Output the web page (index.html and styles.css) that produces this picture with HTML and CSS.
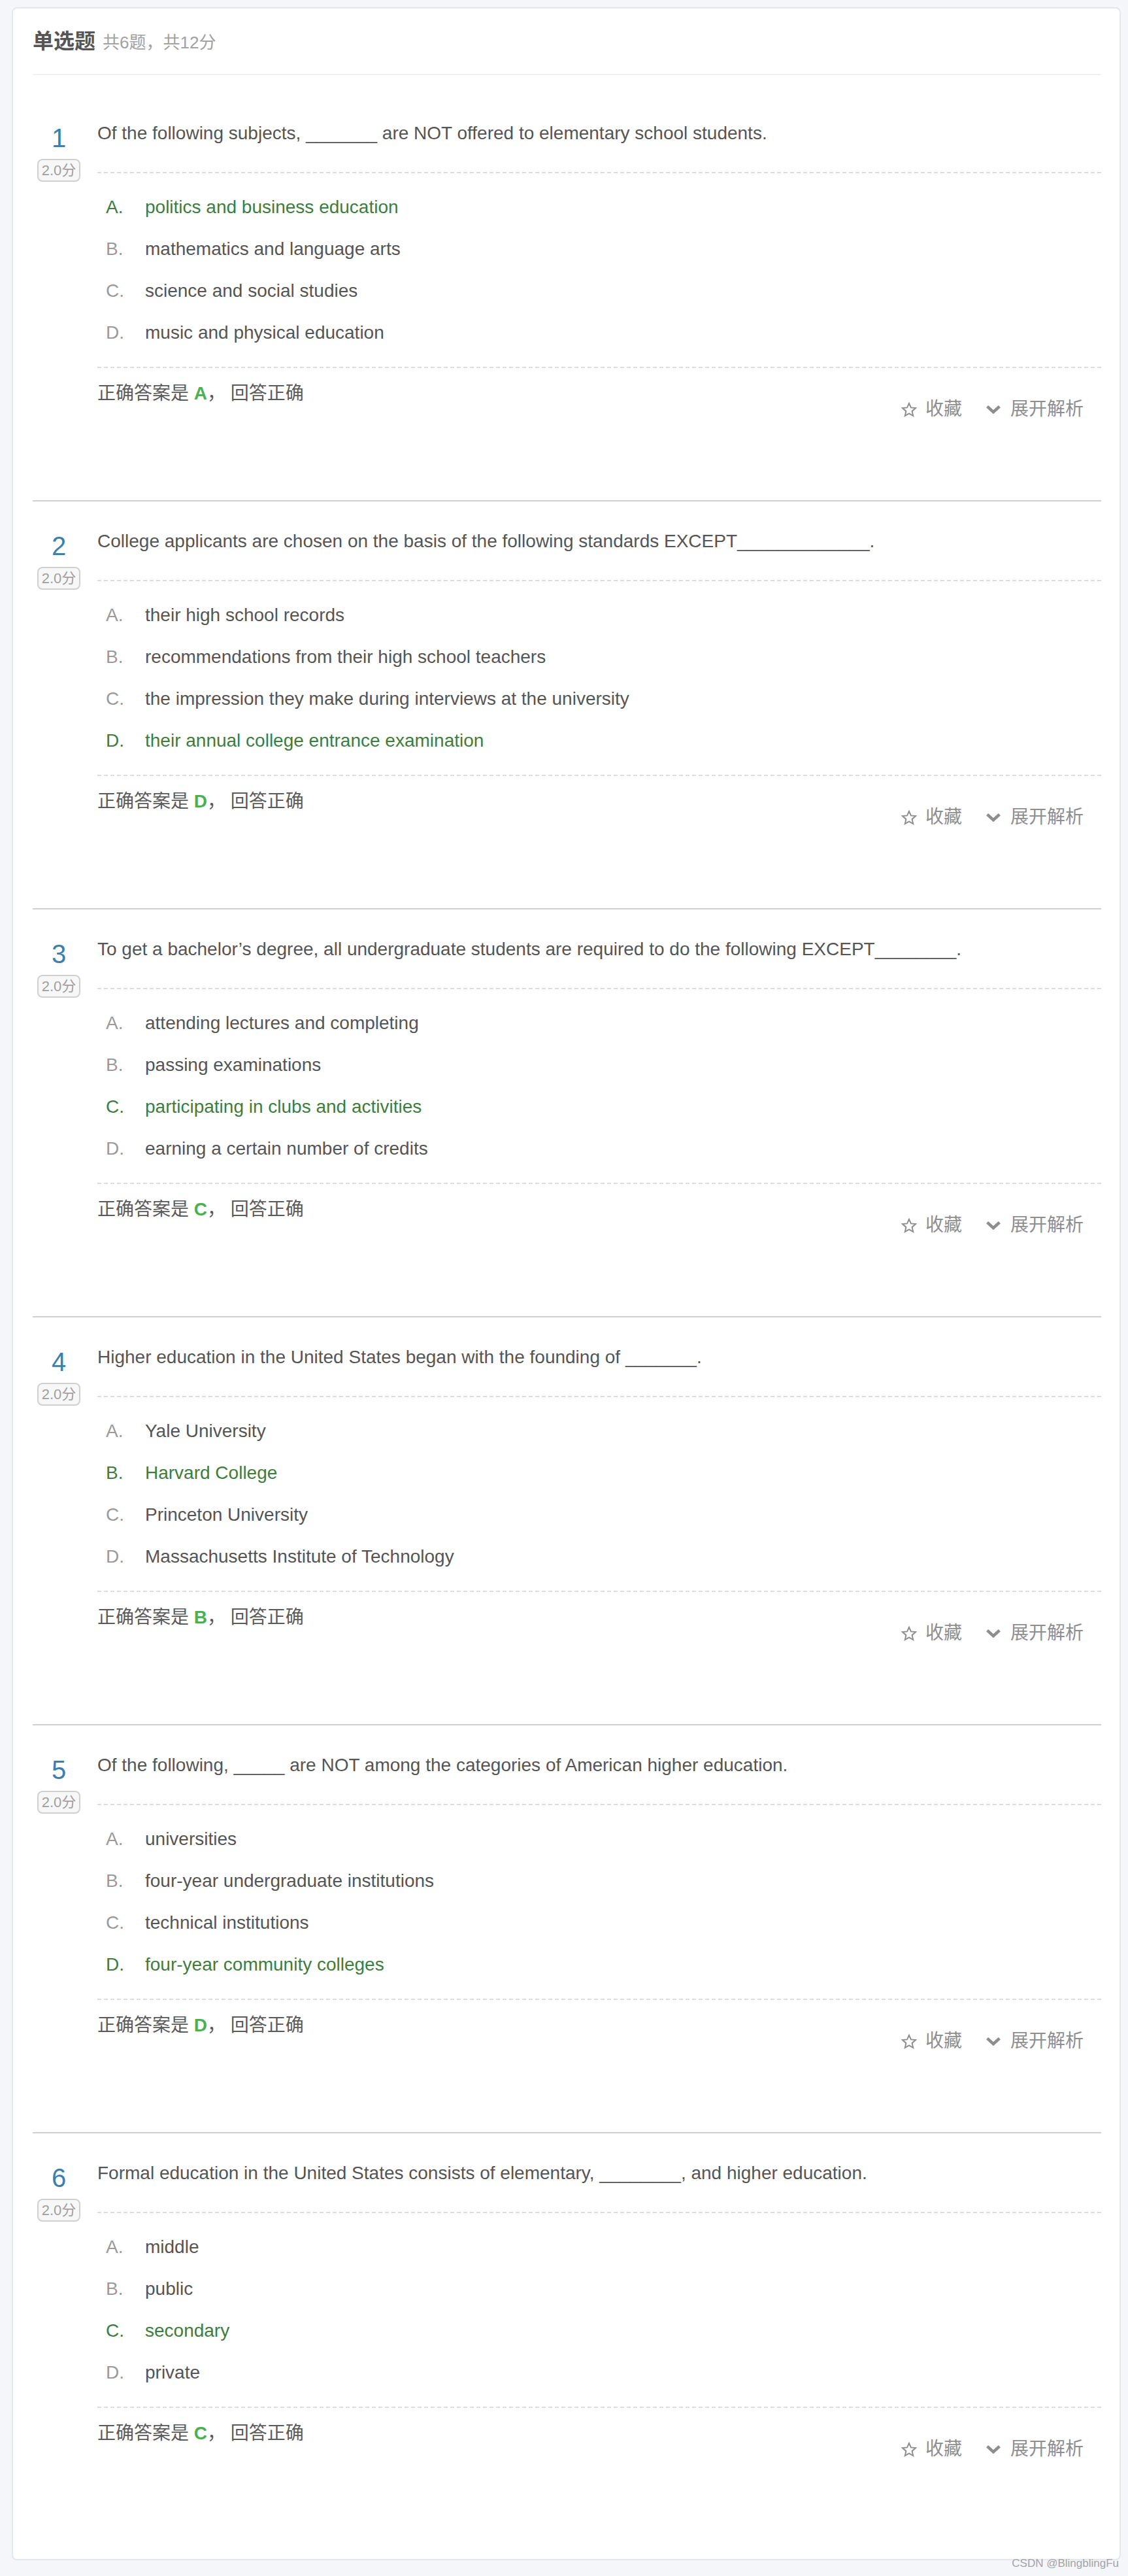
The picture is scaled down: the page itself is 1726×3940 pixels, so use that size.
FILE: index.html
```html
<!DOCTYPE html>
<html lang="zh-CN">
<head>
<meta charset="utf-8">
<title>单选题</title>
<link rel="stylesheet" href="styles.css">
</head>
<body>
<div class="page">
  <section class="card">
    <header class="card-head">
      <span class="head-title">单选题</span><span class="head-sub">共6题，共12分</span>
    </header>

    <div class="q-list">

      <article class="q">
        <div class="q-side">
          <div class="q-num">1</div>
          <span class="q-score">2.0分</span>
        </div>
        <div class="q-main">
          <div class="q-title">Of the following subjects, _______ are NOT offered to elementary school students.</div>
          <ul class="q-opts">
            <li class="opt correct"><span class="opt-key">A.</span><span class="opt-text">politics and business education</span></li>
            <li class="opt"><span class="opt-key">B.</span><span class="opt-text">mathematics and language arts</span></li>
            <li class="opt"><span class="opt-key">C.</span><span class="opt-text">science and social studies</span></li>
            <li class="opt"><span class="opt-key">D.</span><span class="opt-text">music and physical education</span></li>
          </ul>
          <div class="q-foot">
            <div class="q-answer">正确答案是 <b class="ans-key">A</b>， 回答正确</div>
            <div class="q-actions">
              <span class="act"><svg class="ic-star" viewBox="0 0 24 23"><polygon points="12,1.8 14.9,8.4 22,9.1 16.6,13.9 18.2,21 12,17.3 5.8,21 7.4,13.9 2,9.1 9.1,8.4"/></svg>收藏</span>
              <span class="act"><svg class="ic-chev" viewBox="0 0 24 14"><polyline points="2.6,2.6 12,11.2 21.4,2.6"/></svg>展开解析</span>
            </div>
          </div>
        </div>
      </article>

      <article class="q">
        <div class="q-side">
          <div class="q-num">2</div>
          <span class="q-score">2.0分</span>
        </div>
        <div class="q-main">
          <div class="q-title">College applicants are chosen on the basis of the following standards EXCEPT_____________.</div>
          <ul class="q-opts">
            <li class="opt"><span class="opt-key">A.</span><span class="opt-text">their high school records</span></li>
            <li class="opt"><span class="opt-key">B.</span><span class="opt-text">recommendations from their high school teachers</span></li>
            <li class="opt"><span class="opt-key">C.</span><span class="opt-text">the impression they make during interviews at the university</span></li>
            <li class="opt correct"><span class="opt-key">D.</span><span class="opt-text">their annual college entrance examination</span></li>
          </ul>
          <div class="q-foot">
            <div class="q-answer">正确答案是 <b class="ans-key">D</b>， 回答正确</div>
            <div class="q-actions">
              <span class="act"><svg class="ic-star" viewBox="0 0 24 23"><polygon points="12,1.8 14.9,8.4 22,9.1 16.6,13.9 18.2,21 12,17.3 5.8,21 7.4,13.9 2,9.1 9.1,8.4"/></svg>收藏</span>
              <span class="act"><svg class="ic-chev" viewBox="0 0 24 14"><polyline points="2.6,2.6 12,11.2 21.4,2.6"/></svg>展开解析</span>
            </div>
          </div>
        </div>
      </article>

      <article class="q">
        <div class="q-side">
          <div class="q-num">3</div>
          <span class="q-score">2.0分</span>
        </div>
        <div class="q-main">
          <div class="q-title">To get a bachelor’s degree, all undergraduate students are required to do the following EXCEPT________.</div>
          <ul class="q-opts">
            <li class="opt"><span class="opt-key">A.</span><span class="opt-text">attending lectures and completing</span></li>
            <li class="opt"><span class="opt-key">B.</span><span class="opt-text">passing examinations</span></li>
            <li class="opt correct"><span class="opt-key">C.</span><span class="opt-text">participating in clubs and activities</span></li>
            <li class="opt"><span class="opt-key">D.</span><span class="opt-text">earning a certain number of credits</span></li>
          </ul>
          <div class="q-foot">
            <div class="q-answer">正确答案是 <b class="ans-key">C</b>， 回答正确</div>
            <div class="q-actions">
              <span class="act"><svg class="ic-star" viewBox="0 0 24 23"><polygon points="12,1.8 14.9,8.4 22,9.1 16.6,13.9 18.2,21 12,17.3 5.8,21 7.4,13.9 2,9.1 9.1,8.4"/></svg>收藏</span>
              <span class="act"><svg class="ic-chev" viewBox="0 0 24 14"><polyline points="2.6,2.6 12,11.2 21.4,2.6"/></svg>展开解析</span>
            </div>
          </div>
        </div>
      </article>

      <article class="q">
        <div class="q-side">
          <div class="q-num">4</div>
          <span class="q-score">2.0分</span>
        </div>
        <div class="q-main">
          <div class="q-title">Higher education in the United States began with the founding of _______.</div>
          <ul class="q-opts">
            <li class="opt"><span class="opt-key">A.</span><span class="opt-text">Yale University</span></li>
            <li class="opt correct"><span class="opt-key">B.</span><span class="opt-text">Harvard College</span></li>
            <li class="opt"><span class="opt-key">C.</span><span class="opt-text">Princeton University</span></li>
            <li class="opt"><span class="opt-key">D.</span><span class="opt-text">Massachusetts Institute of Technology</span></li>
          </ul>
          <div class="q-foot">
            <div class="q-answer">正确答案是 <b class="ans-key">B</b>， 回答正确</div>
            <div class="q-actions">
              <span class="act"><svg class="ic-star" viewBox="0 0 24 23"><polygon points="12,1.8 14.9,8.4 22,9.1 16.6,13.9 18.2,21 12,17.3 5.8,21 7.4,13.9 2,9.1 9.1,8.4"/></svg>收藏</span>
              <span class="act"><svg class="ic-chev" viewBox="0 0 24 14"><polyline points="2.6,2.6 12,11.2 21.4,2.6"/></svg>展开解析</span>
            </div>
          </div>
        </div>
      </article>

      <article class="q">
        <div class="q-side">
          <div class="q-num">5</div>
          <span class="q-score">2.0分</span>
        </div>
        <div class="q-main">
          <div class="q-title">Of the following, _____ are NOT among the categories of American higher education.</div>
          <ul class="q-opts">
            <li class="opt"><span class="opt-key">A.</span><span class="opt-text">universities</span></li>
            <li class="opt"><span class="opt-key">B.</span><span class="opt-text">four-year undergraduate institutions</span></li>
            <li class="opt"><span class="opt-key">C.</span><span class="opt-text">technical institutions</span></li>
            <li class="opt correct"><span class="opt-key">D.</span><span class="opt-text">four-year community colleges</span></li>
          </ul>
          <div class="q-foot">
            <div class="q-answer">正确答案是 <b class="ans-key">D</b>， 回答正确</div>
            <div class="q-actions">
              <span class="act"><svg class="ic-star" viewBox="0 0 24 23"><polygon points="12,1.8 14.9,8.4 22,9.1 16.6,13.9 18.2,21 12,17.3 5.8,21 7.4,13.9 2,9.1 9.1,8.4"/></svg>收藏</span>
              <span class="act"><svg class="ic-chev" viewBox="0 0 24 14"><polyline points="2.6,2.6 12,11.2 21.4,2.6"/></svg>展开解析</span>
            </div>
          </div>
        </div>
      </article>

      <article class="q">
        <div class="q-side">
          <div class="q-num">6</div>
          <span class="q-score">2.0分</span>
        </div>
        <div class="q-main">
          <div class="q-title">Formal education in the United States consists of elementary, ________, and higher education.</div>
          <ul class="q-opts">
            <li class="opt"><span class="opt-key">A.</span><span class="opt-text">middle</span></li>
            <li class="opt"><span class="opt-key">B.</span><span class="opt-text">public</span></li>
            <li class="opt correct"><span class="opt-key">C.</span><span class="opt-text">secondary</span></li>
            <li class="opt"><span class="opt-key">D.</span><span class="opt-text">private</span></li>
          </ul>
          <div class="q-foot">
            <div class="q-answer">正确答案是 <b class="ans-key">C</b>， 回答正确</div>
            <div class="q-actions">
              <span class="act"><svg class="ic-star" viewBox="0 0 24 23"><polygon points="12,1.8 14.9,8.4 22,9.1 16.6,13.9 18.2,21 12,17.3 5.8,21 7.4,13.9 2,9.1 9.1,8.4"/></svg>收藏</span>
              <span class="act"><svg class="ic-chev" viewBox="0 0 24 14"><polyline points="2.6,2.6 12,11.2 21.4,2.6"/></svg>展开解析</span>
            </div>
          </div>
        </div>
      </article>

    </div>
  </section>
  <div class="watermark">CSDN @BlingblingFu</div>
</div>
</body>
</html>
```

FILE: styles.css
```css
* {
  box-sizing: border-box;
}

html, body {
  margin: 0;
  padding: 0;
}

body {
  background: #f4f6f9;
  font-family: "Liberation Sans", "Noto Sans CJK SC", sans-serif;
  color: #555;
}

.page {
  position: relative;
  width: 1726px;
  min-height: 3940px;
  padding: 11px 0 0 18px;
}

.card {
  width: 1697px;
  background: #fff;
  border: 2px solid #e3e8ee;
  border-radius: 8px;
  padding: 26px 28px 29px 30px;
}

.card-head {
  box-sizing: content-box;
  height: 48px;
  line-height: 48px;
  padding-bottom: 26px;
  border-bottom: 2px solid #eef0f2;
}

.head-title {
  font-size: 32px;
  font-weight: bold;
  color: #555;
}

.head-sub {
  font-size: 26px;
  line-height: 26px;
  font-weight: normal;
  color: #a2a2a2;
  margin-left: 11px;
}

.q-list {
  margin-top: 28px;
}

.q {
  display: flex;
  padding-top: 40px;
  border-bottom: 2px solid #cfcfcf;
}

.q:last-child {
  border-bottom: none;
}

.q-side {
  width: 80px;
  margin-right: 19px;
  display: flex;
  flex-direction: column;
  align-items: center;
  padding-top: 8px;
}

.q-num {
  font-size: 40px;
  line-height: 40px;
  color: #3b7fae;
}

.q-score {
  margin-top: 12px;
  display: inline-block;
  height: 35px;
  line-height: 31px;
  padding: 0 5px;
  font-size: 22px;
  color: #a0a0a0;
  background: #f7f7f7;
  border: 2px solid #d0d0d0;
  border-radius: 8px;
}

.q-main {
  flex: 1;
  min-width: 0;
}

.q-title {
  font-size: 28px;
  line-height: 42px;
  padding-bottom: 38px;
  border-bottom: 2px dashed #dcdcdc;
  color: #555;
}

.q-opts {
  list-style: none;
  margin: 0;
  padding: 20px 0;
  border-bottom: 2px dashed #dcdcdc;
}

.opt {
  display: flex;
  height: 64px;
  line-height: 64px;
  font-size: 28px;
  padding-left: 13px;
}

.opt-key {
  width: 60px;
  color: #9a9a9a;
}

.opt-text {
  color: #555;
}

.opt.correct .opt-key,
.opt.correct .opt-text {
  color: #3d7d3d;
}

.q-foot {
  display: flex;
  justify-content: space-between;
  align-items: flex-start;
  padding: 18px 0 118px;
}

.q-answer {
  font-size: 28px;
  line-height: 42px;
  color: #5a5a5a;
}

.ans-key {
  color: #4bb050;
  font-weight: bold;
}

.q-actions {
  display: flex;
  align-items: center;
  margin-top: 24px;
  margin-right: 27px;
  font-size: 28px;
  line-height: 42px;
  color: #8e8e8e;
}

.act {
  display: flex;
  align-items: center;
}

.act + .act {
  margin-left: 36px;
}

.ic-star {
  width: 24px;
  height: 23px;
  margin-right: 13px;
  fill: none;
  stroke: #8e8e8e;
  stroke-width: 2;
  stroke-linejoin: miter;
}

.ic-chev {
  width: 24px;
  height: 14px;
  margin-right: 14px;
  fill: none;
  stroke: #8e8e8e;
  stroke-width: 4.6;
  stroke-linejoin: miter;
  stroke-linecap: butt;
}

.watermark {
  position: absolute;
  right: 14px;
  top: 3910px;
  font-size: 17px;
  line-height: 22px;
  color: #a3a3a3;
}
```
